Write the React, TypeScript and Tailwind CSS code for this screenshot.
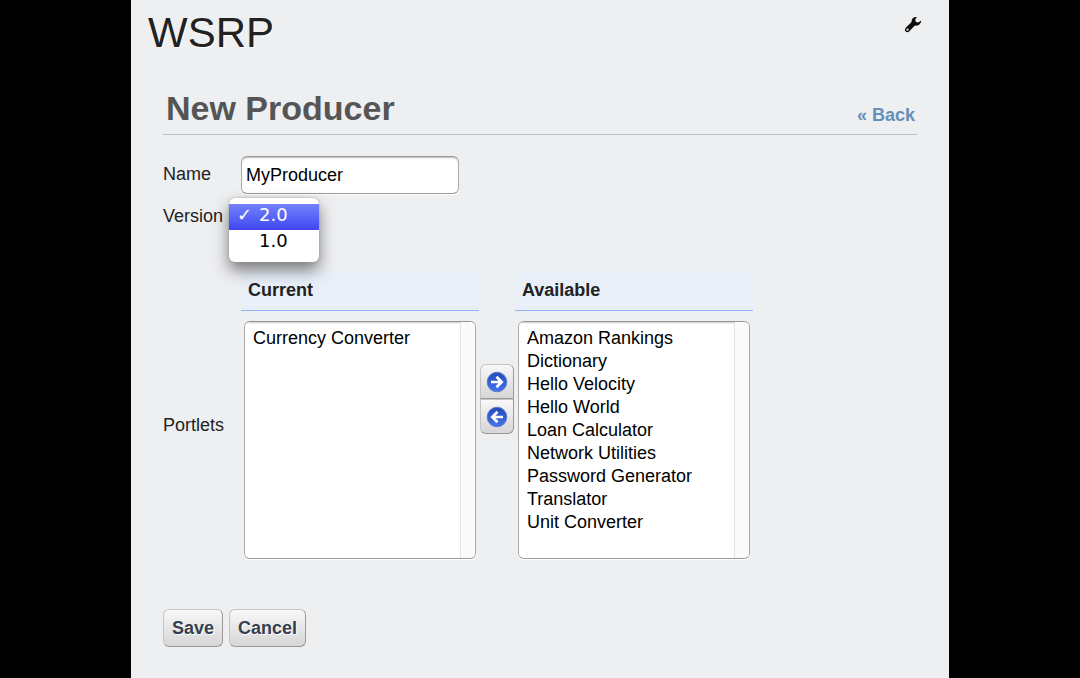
import React from "react";

const current = ["Currency Converter"];
const available = [
  "Amazon Rankings",
  "Dictionary",
  "Hello Velocity",
  "Hello World",
  "Loan Calculator",
  "Network Utilities",
  "Password Generator",
  "Translator",
  "Unit Converter",
];

function WrenchIcon() {
  return (
    <svg width="18" height="18" viewBox="0 0 18 18" aria-hidden="true">
      <path
        d="M12.800 1C9.800.6 7.500 2.500 7.600 5.200c0 .6-.2 1-.6 1.400L1.800 11.800c-1.100 1.100-1.200 2.700-.2 3.700s2.700.9 3.800-.2l5-5.200c.4-.4.9-.6 1.500-.5 2.900.3 5.200-1.900 5.300-5l-2.900 1.900-2.500-.5-.5-2.400z"
        fill="#0c0c0c"
      />
      <circle cx="3.500" cy="13.600" r="1.200" fill="#ddd" />
    </svg>
  );
}

function ArrowIcon({ left = false }: { left?: boolean }) {
  return (
    <svg width="22" height="22" viewBox="0 0 22 22" aria-hidden="true">
      <defs>
        <linearGradient id={left ? "disc-left" : "disc-right"} x1="0" y1="0" x2="0" y2="1">
          <stop offset="0" stopColor="#2449b8" />
          <stop offset="1" stopColor="#4474ee" />
        </linearGradient>
      </defs>
      <circle cx="11" cy="11" r="9.800" fill={left ? "url(#disc-left)" : "url(#disc-right)"} stroke="#5f7dcc" />
      <path
        d={left ? "M17 11H7M11.500 5.800L6.300 11l5.200 5.200" : "M5 11H15M10.500 5.800L15.700 11l-5.200 5.200"}
        fill="none"
        stroke="#fff"
        strokeWidth="2.700"
      />
    </svg>
  );
}

function PortletList({ id, title, items }: { id: string; title: string; items: string[] }) {
  return (
    <div className="w-[238px]">
      <label
        htmlFor={id}
        className="flex h-10 items-center border-b border-[#8fb4f5] bg-[#e8eff8] px-[7px] pb-0.5 font-bold text-[#222]"
      >
        {title}
      </label>
      <div className="mx-[3px] mt-[10px] flex h-[238px] overflow-hidden rounded-md border border-t-[#959595] border-r-[#aaa] border-b-[#999] border-l-[#aaa] bg-white shadow-[0_1px_0_#fff]">
        <select
          id={id}
          multiple
          className="min-w-0 flex-1 appearance-none overflow-hidden bg-white px-2 pt-[6px] text-lg text-black shadow-[inset_0_2px_2px_-1px_#ccc] outline-none"
        >
          {items.map((item) => (
            <option key={item} className="block h-[23px] min-h-0 p-0 leading-[23px]">
              {item}
            </option>
          ))}
        </select>
        <div className="w-[15px] border-l border-[#e4e4e4] bg-[#fafafa]" />
      </div>
    </div>
  );
}

const buttonLook =
  "border border-t-[#c4c4c4] border-r-[#999] border-b-[#999] border-l-[#c4c4c4] bg-linear-to-b from-[#f8f8f8] to-[#d6d6d6]";

export default function App() {
  return (
    <div className="min-h-screen bg-black font-['Liberation_Sans',Arial,sans-serif] text-lg text-[#222]">
      <main className="mx-auto min-h-screen max-w-[818px] bg-[#eeeff1]">
        <header className="flex items-start justify-between pt-2 pr-[27px] pl-[17px]">
          <h1 className="text-[42px] leading-[50px] [text-shadow:1px_1px_0_#fff]">WSRP</h1>
          <button type="button" aria-label="Options" className="mt-2">
            <WrenchIcon />
          </button>
        </header>

        <form className="px-8 pt-7" onSubmit={(e) => e.preventDefault()}>
          <div className="flex items-end justify-between border-b border-[#bfc0c2] pr-0.5 pb-1 pl-[3px]">
            <h2 className="text-[34px] leading-[44px] font-bold text-[#555]">New Producer</h2>
            <a href="#back" className="pb-px font-bold text-[#6490b8]">
              « Back
            </a>
          </div>

          <div className="mt-[21px] flex items-center">
            <label htmlFor="name" className="w-[78px] shrink-0 pb-0.5">
              Name
            </label>
            <input
              id="name"
              type="text"
              defaultValue="MyProducer"
              className="h-[38px] w-[218px] rounded-md border border-t-[#959595] border-r-[#aaa] border-b-[#999] border-l-[#aaa] bg-white px-1 text-black shadow-[inset_0_2px_2px_-1px_#bbb,0_1px_0_#fff] outline-none"
            />
          </div>

          <div className="relative mt-1 flex h-9 items-center">
            <label htmlFor="version">Version</label>
            <div className="absolute top-0 left-[66px] z-10 w-[90px] overflow-hidden rounded-md bg-white py-[6px] shadow-[0_0_2px_#999,0_8px_16px_rgba(0,0,0,0.5)]">
              <select
                id="version"
                size={2}
                defaultValue="2.0"
                className="block h-[52px] w-full appearance-none overflow-hidden bg-white font-['DejaVu_Sans',sans-serif] text-lg text-black outline-none"
              >
                {["2.0", "1.0"].map((v) => (
                  <option
                    key={v}
                    value={v}
                    className="block h-[26px] min-h-0 p-0 pl-2 leading-[24px] before:inline-block before:w-[22px] before:content-[''] checked:bg-linear-to-b checked:from-[#7480fa] checked:to-[#4145f0] checked:text-white checked:before:content-['✓']"
                  >
                    {v}
                  </option>
                ))}
              </select>
            </div>
          </div>

          <div className="mt-[37px] flex items-stretch" role="group" aria-labelledby="portlets">
            <span id="portlets" className="flex w-[78px] shrink-0 items-center pt-[19px]">
              Portlets
            </span>
            <PortletList id="current" title="Current" items={current} />
            <div className="mx-px mt-[93px] flex w-[34px] shrink-0 flex-col">
              <button
                type="button"
                aria-label="Move to available"
                className={`flex h-[35px] items-center justify-center rounded-t-md ${buttonLook}`}
              >
                <ArrowIcon />
              </button>
              <button
                type="button"
                aria-label="Move to current"
                className={`flex h-[35px] items-center justify-center rounded-b-md ${buttonLook}`}
              >
                <ArrowIcon left />
              </button>
            </div>
            <PortletList id="available" title="Available" items={available} />
          </div>

          <div className="mt-[50px] flex gap-[6px] pb-8">
            {["Save", "Cancel"].map((text) => (
              <button
                key={text}
                type="button"
                className={`h-[38px] rounded-md px-2 font-bold text-[#34404f] [text-shadow:1px_1px_0_#fff] ${buttonLook}`}
              >
                {text}
              </button>
            ))}
          </div>
        </form>
      </main>
    </div>
  );
}
